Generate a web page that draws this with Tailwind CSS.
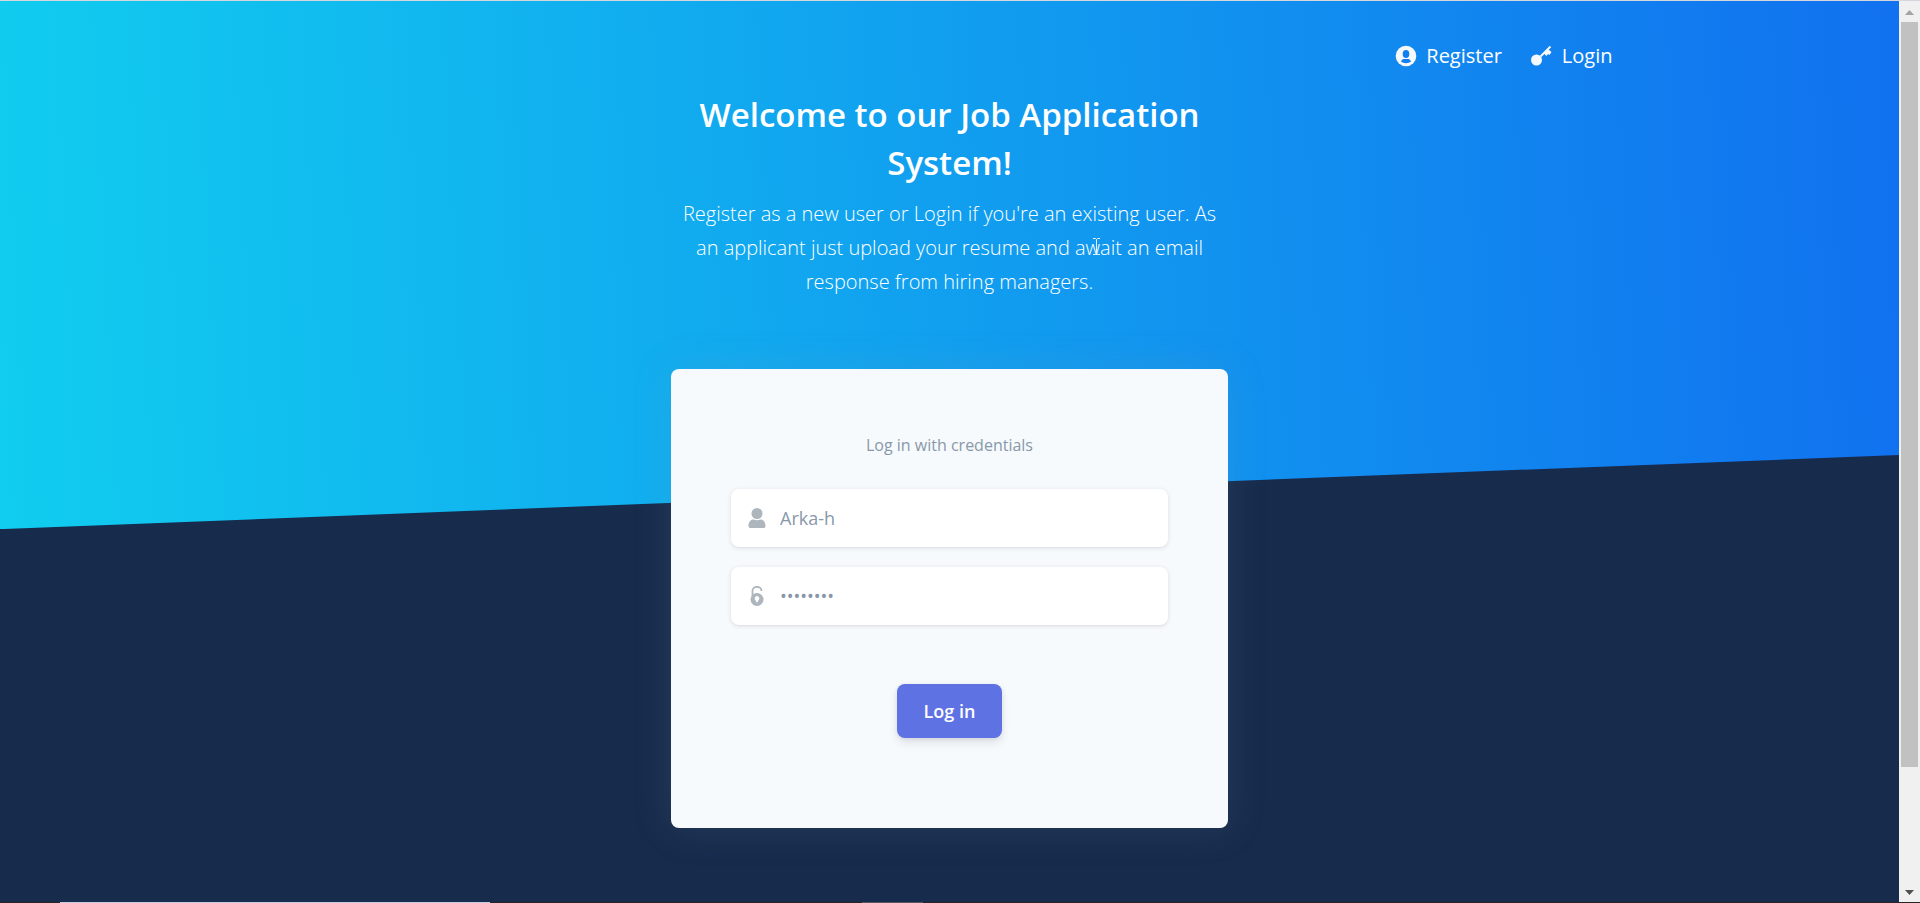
<!DOCTYPE html>
<html lang="en">
<head>
<meta charset="utf-8">
<title>Job Application System</title>
<script src="https://cdn.jsdelivr.net/npm/@tailwindcss/browser@4"></script>
</head>
<body class="flex min-h-screen flex-col bg-[#172b4d] font-['Open_Sans',sans-serif] text-white">
<div class="h-px bg-[#d5d7dc]"></div>
<div class="flex grow">
  <main class="min-w-0 flex-1">
    <header class="relative bg-[linear-gradient(87deg,#11cdef_0%,#1171ef_100%)] pb-[230px]">
      <nav class="mx-auto flex max-w-[1350px] justify-end gap-7 px-3 pt-[35px] text-xl leading-10">
        <a href="#register" class="flex items-center gap-2">
          <svg class="size-6" viewBox="0 0 24 24" aria-hidden="true"><circle cx="12" cy="12" r="10.300" fill="#f6f9fc"/><ellipse cx="12" cy="10" rx="3.300" ry="3.900" fill="#1180f0"/><path d="M7 17.500c1-3 3-2.500 5-2.500s4-.5 5 2.500c-3 2.300-7 2.300-10 0z" fill="#1180f0"/></svg>
          Register
        </a>
        <a href="#login" class="flex items-center gap-2">
          <svg class="size-6" viewBox="0 0 24 24" aria-hidden="true"><circle cx="6.500" cy="16" r="5.500" fill="#f6f9fc"/><path d="M10.500 12.500 20.500 2.500" stroke="#f6f9fc" stroke-width="2"/><path d="M18 5l3.500 3-2 3-1.500-1-1.500 2-3-3z" fill="#f6f9fc"/></svg>
          Login
        </a>
      </nav>
      <div class="mx-auto mt-[15px] w-[557px] max-w-full text-center">
        <h1 class="text-[33px] leading-12 font-semibold">Welcome to our Job Application System!</h1>
        <p class="mt-2.5 text-xl leading-[34px] font-light">Register as a new user or Login if you're an existing user. As an applicant just upload your resume and await an email response from hiring managers.</p>
      </div>
      <svg class="absolute inset-x-0 bottom-0 w-full" viewBox="0 0 2560 100" preserveAspectRatio="none" aria-hidden="true"><polygon points="2560 0 2560 100 0 100" fill="#172b4d"/></svg>
    </header>
    <section class="relative mx-auto mt-[-160px] w-[557px] max-w-full rounded-lg bg-[#f7fafc] px-15 pt-15 pb-[90px] text-center shadow-[0_0_40px_rgba(136,152,170,0.15)]">
      <h2 class="text-base leading-8 text-[#8898aa]">Log in with credentials</h2>
      <form class="mt-7 flex flex-col items-center gap-5">
        <label class="flex h-[58px] w-full items-center gap-[13px] rounded-lg bg-white px-4 shadow-[0_1px_4px_rgba(50,50,93,0.15),0_1px_0_rgba(0,0,0,0.02)]">
          <svg class="size-5 shrink-0 fill-[#adb5bd]" viewBox="0 0 20 20" aria-hidden="true"><ellipse cx="10" cy="5.500" rx="5.500" ry="5.500"/><path d="M1.500 18c0-4 2-6.500 5-6.500 2 1 5 1 7 0 3 0 5 2.500 5 6.500 0 1.500-1 2-2 2h-13c-1 0-2-.5-2-2z"/></svg>
          <input type="text" aria-label="Username" placeholder="Arka-h" class="w-full min-w-0 text-lg text-[#8898aa] outline-none placeholder:text-[#8898aa]">
        </label>
        <label class="flex h-[58px] w-full items-center gap-[13px] rounded-lg bg-white px-4 shadow-[0_1px_4px_rgba(50,50,93,0.15),0_1px_0_rgba(0,0,0,0.02)]">
          <svg class="size-5 shrink-0" viewBox="0 0 20 20" aria-hidden="true"><path d="M5.500 10V5a4.500 4.200 0 0 1 9 0" fill="none" stroke="#adb5bd" stroke-width="1.800"/><circle cx="10" cy="13.500" r="6.500" fill="#adb5bd"/><path d="M10 10a2.400 2.400 0 0 1 1.500 4.200L10 17l-1.500-2.800A2.400 2.400 0 0 1 10 10z" fill="#fff"/></svg>
          <input type="password" aria-label="Password" value="password" class="w-full min-w-0 text-lg text-[#8898aa] outline-none">
        </label>
        <button type="button" class="mt-[39px] h-[54px] rounded-lg bg-[#5e72e4] px-[27px] text-lg font-semibold shadow-[0_5px_8px_rgba(50,50,93,0.11),0_1px_4px_rgba(0,0,0,0.08)]">Log in</button>
      </form>
    </section>
    <svg class="absolute top-[238px] left-[1092px] h-[17px] w-[9px]" viewBox="0 0 9 17" fill="none" stroke="#e8f4fd" aria-hidden="true"><path d="M1 .5h2.500l1 1 1-1H8M4.500 1v15M1 16.500h2.500l1-1 1 1H8"/></svg>
  </main>
  <aside class="flex w-[21px] flex-col items-center bg-[#f0f0f0]" aria-hidden="true">
    <svg class="h-[21px] w-[21px]" viewBox="0 0 21 21"><path d="M6 14 10.500 9 15 14z" fill="#a3a3a3"/></svg>
    <div class="h-[745px] w-[17px] bg-[#c1c1c1]"></div>
    <svg class="mt-auto h-[21px] w-[21px]" viewBox="0 0 21 21"><path d="M6 9 10.500 14 15 9z" fill="#505050"/></svg>
  </aside>
</div>
<div class="flex h-px bg-[#2b2422]"><div class="ml-[60px] w-[430px] bg-[#c5cbe0]"></div><div class="ml-[372px] w-[61px] bg-[#55565e]"></div></div>
</body>
</html>
